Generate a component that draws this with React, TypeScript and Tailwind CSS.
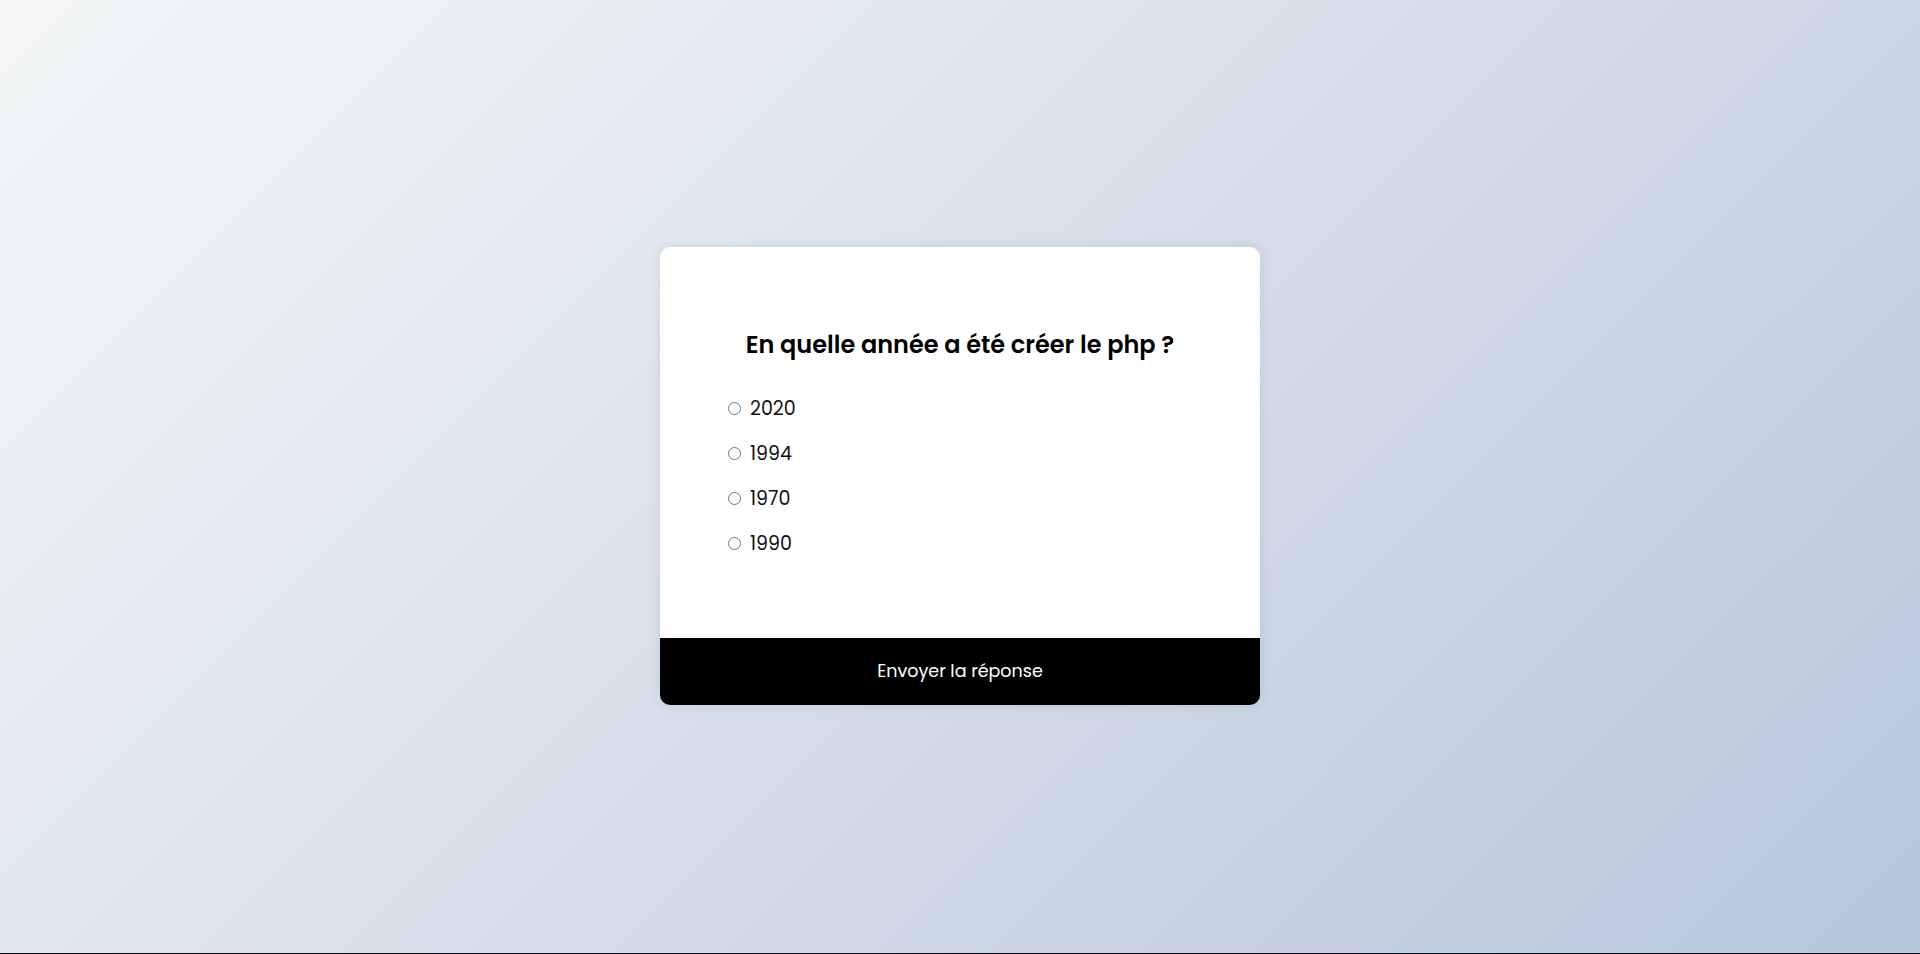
import React from "react";

const options = ["2020", "1994", "1970", "1990"];

export default function App() {
  return (
    <div className="flex h-[954px] w-full flex-col overflow-hidden">
      <div className="flex flex-1 items-start justify-center bg-[linear-gradient(135deg,#f5f7f8_0%,#b7c6db_100%)] pt-[247px] font-['Poppins','Inter','Noto_Sans',sans-serif]">
        <div className="flex w-[600px] flex-col overflow-hidden rounded-[10px] bg-white shadow-[0_0_10px_2px_rgba(100,100,111,0.12)]">
          <div className="flex h-[391px] flex-col px-[68px] pt-[80px]">
            <h2 className="text-center text-[24px] font-semibold leading-[36px] text-black">
              En quelle année a été créer le php ?
            </h2>
            <ul className="mt-[32px] flex flex-col gap-[18px]">
              {options.map((o, i) => (
                <li key={o} className="flex h-[27px] items-center">
                  <input
                    type="radio"
                    name="answer"
                    id={`a${i}`}
                    className="m-0 h-[13px] w-[13px]"
                  />
                  <label htmlFor={`a${i}`} className="ml-[9px] text-[19px] leading-[27px] text-[#111]">
                    {o}
                  </label>
                </li>
              ))}
            </ul>
          </div>
          <button className="h-[67px] w-full bg-black text-[17.5px] text-white">
            Envoyer la réponse
          </button>
        </div>
      </div>
      <div className="h-px w-full bg-[#0e1218]" />
    </div>
  );
}
